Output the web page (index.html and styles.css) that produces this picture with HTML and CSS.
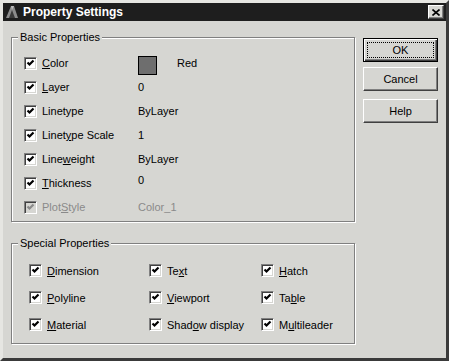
FILE: index.html
```html
<!DOCTYPE html>
<html lang="en">
<head>
    <meta charset="UTF-8">
    <title>Property Settings</title>
    <link rel="stylesheet" href="styles.css">
</head>
<body>
    <div class="window">
        <!-- title bar -->
        <div class="titlebar">
            <svg class="app-icon" width="14" height="14" viewBox="0 0 14 14">
                <polygon points="1,13 6,1 9,1 13,13" fill="#8c8c8c"/>
                <polygon points="4,13 7,5 10,13" fill="#3a3a3a"/>
                <polygon points="6,1 9,1 7,5" fill="#bdbdbd"/>
            </svg>
            <span class="title">Property Settings</span>
            <span class="close-btn">
                <svg width="8" height="7" viewBox="0 0 8 7">
                    <path d="M0.5 0.5 L7.5 6.5 M7.5 0.5 L0.5 6.5" stroke="#000" stroke-width="1.6"/>
                </svg>
            </span>
        </div>

        <div class="dialog">
            <div class="groups">
                <!-- basic properties -->
                <fieldset class="group basic">
                    <legend>Basic Properties</legend>
                    <div class="prop-list">
                        <div class="prop-row">
                            <label class="check"><span class="box"><svg viewBox="0 0 9 9"><polyline points="1.5,3.5 3.5,5.5 7.5,1.5"/></svg></span><span><u>C</u>olor</span></label>
                            <span class="value color-value"><span class="swatch"></span>Red</span>
                        </div>
                        <div class="prop-row">
                            <label class="check"><span class="box"><svg viewBox="0 0 9 9"><polyline points="1.5,3.5 3.5,5.5 7.5,1.5"/></svg></span><span><u>L</u>ayer</span></label>
                            <span class="value">0</span>
                        </div>
                        <div class="prop-row">
                            <label class="check"><span class="box"><svg viewBox="0 0 9 9"><polyline points="1.5,3.5 3.5,5.5 7.5,1.5"/></svg></span><span>Linetype</span></label>
                            <span class="value">ByLayer</span>
                        </div>
                        <div class="prop-row">
                            <label class="check"><span class="box"><svg viewBox="0 0 9 9"><polyline points="1.5,3.5 3.5,5.5 7.5,1.5"/></svg></span><span>Linet<u>y</u>pe Scale</span></label>
                            <span class="value">1</span>
                        </div>
                        <div class="prop-row">
                            <label class="check"><span class="box"><svg viewBox="0 0 9 9"><polyline points="1.5,3.5 3.5,5.5 7.5,1.5"/></svg></span><span>Line<u>w</u>eight</span></label>
                            <span class="value">ByLayer</span>
                        </div>
                        <div class="prop-row">
                            <label class="check"><span class="box"><svg viewBox="0 0 9 9"><polyline points="1.5,3.5 3.5,5.5 7.5,1.5"/></svg></span><span><u>T</u>hickness</span></label>
                            <span class="value raised">0</span>
                        </div>
                        <div class="prop-row disabled">
                            <label class="check"><span class="box"><svg viewBox="0 0 9 9"><polyline points="1.5,3.5 3.5,5.5 7.5,1.5"/></svg></span><span>Plot<u>S</u>tyle</span></label>
                            <span class="value">Color_1</span>
                        </div>
                    </div>
                </fieldset>

                <!-- special properties -->
                <fieldset class="group special">
                    <legend>Special Properties</legend>
                    <div class="special-grid">
                        <label class="check"><span class="box"><svg viewBox="0 0 9 9"><polyline points="1.5,3.5 3.5,5.5 7.5,1.5"/></svg></span><span><u>D</u>imension</span></label>
                        <label class="check"><span class="box"><svg viewBox="0 0 9 9"><polyline points="1.5,3.5 3.5,5.5 7.5,1.5"/></svg></span><span>Te<u>x</u>t</span></label>
                        <label class="check"><span class="box"><svg viewBox="0 0 9 9"><polyline points="1.5,3.5 3.5,5.5 7.5,1.5"/></svg></span><span><u>H</u>atch</span></label>
                        <label class="check"><span class="box"><svg viewBox="0 0 9 9"><polyline points="1.5,3.5 3.5,5.5 7.5,1.5"/></svg></span><span><u>P</u>olyline</span></label>
                        <label class="check"><span class="box"><svg viewBox="0 0 9 9"><polyline points="1.5,3.5 3.5,5.5 7.5,1.5"/></svg></span><span><u>V</u>iewport</span></label>
                        <label class="check"><span class="box"><svg viewBox="0 0 9 9"><polyline points="1.5,3.5 3.5,5.5 7.5,1.5"/></svg></span><span>Ta<u>b</u>le</span></label>
                        <label class="check"><span class="box"><svg viewBox="0 0 9 9"><polyline points="1.5,3.5 3.5,5.5 7.5,1.5"/></svg></span><span><u>M</u>aterial</span></label>
                        <label class="check"><span class="box"><svg viewBox="0 0 9 9"><polyline points="1.5,3.5 3.5,5.5 7.5,1.5"/></svg></span><span>Shad<u>o</u>w display</span></label>
                        <label class="check"><span class="box"><svg viewBox="0 0 9 9"><polyline points="1.5,3.5 3.5,5.5 7.5,1.5"/></svg></span><span>M<u>u</u>ltileader</span></label>
                    </div>
                </fieldset>
            </div>

            <!-- dialog buttons -->
            <div class="buttons">
                <button class="btn btn-ok"><span class="focus">OK</span></button>
                <button class="btn btn-cancel">Cancel</button>
                <button class="btn btn-help">Help</button>
            </div>
        </div>
    </div>
</body>
</html>
```

FILE: styles.css
```css
:root {
    --face: #d6d6d2;
    --shadow: #808080;
    --dark: #404040;
    --light: #ffffff;
}

body {
    margin: 0;
    font-family: "Liberation Sans", Arial, sans-serif;
    font-size: 11px;
    color: #000;
    background: var(--face);
}

.window {
    width: 449px;
    height: 361px;
    box-sizing: border-box;
    background: var(--face);
    border: 3px solid;
    border-color: #e6e6e2 #3a3a3a #3a3a3a #e6e6e2;
    display: flex;
    flex-direction: column;
}

/* title bar */
.titlebar {
    height: 18px;
    flex-shrink: 0;
    background: #1e1e1e;
    color: #fff;
    display: flex;
    align-items: center;
    gap: 4px;
    padding: 0 2px;
}

.app-icon {
    display: block;
}

.title {
    font-weight: bold;
    font-size: 12px;
}

.close-btn {
    margin-left: auto;
    width: 16px;
    height: 14px;
    box-sizing: border-box;
    background: var(--face);
    border: 1px solid;
    border-color: var(--light) var(--dark) var(--dark) var(--light);
    box-shadow: inset -1px -1px 0 var(--shadow);
    display: flex;
    align-items: center;
    justify-content: center;
}

.close-btn svg {
    display: block;
}

/* body */
.dialog {
    display: flex;
    gap: 8px;
    padding: 10px 8px 0 8px;
}

.groups {
    width: 344px;
    display: flex;
    flex-direction: column;
}

.group {
    margin: 0;
    padding: 0;
    min-width: 0;
    border: 1px solid var(--shadow);
    box-shadow: 1px 1px 0 var(--light), inset 1px 1px 0 var(--light);
}

.group legend {
    margin-left: 6px;
    padding: 0 2px;
    line-height: 13px;
    background: var(--face);
}

.prop-list {
    padding: 7px 0 2px 12px;
}

.special {
    margin-top: 15px;
}

.prop-row {
    display: grid;
    grid-template-columns: 114px auto;
    align-items: center;
    height: 24px;
}

.value.raised {
    position: relative;
    top: -3px;
}

.color-value {
    display: flex;
    align-items: center;
    gap: 20px;
}

.swatch {
    width: 19px;
    height: 19px;
    box-sizing: border-box;
    border: 1px solid #000;
    background: #6e6e6e;
    position: relative;
    top: 2px;
}

.special-grid {
    display: grid;
    grid-template-columns: 120px 112px auto;
    grid-auto-rows: 27px;
    align-items: center;
    padding: 7px 0 5px 17px;
}

/* checkboxes */
.check {
    display: flex;
    align-items: center;
    gap: 5px;
}

.box {
    width: 13px;
    height: 13px;
    box-sizing: border-box;
    background: #fff;
    border: 1px solid;
    border-color: var(--shadow) var(--light) var(--light) var(--shadow);
    box-shadow: inset 1px 1px 0 var(--dark), inset -1px -1px 0 var(--face);
    padding: 1px;
}

.box svg {
    display: block;
    width: 9px;
    height: 9px;
}

.box polyline {
    fill: none;
    stroke: #000;
    stroke-width: 2.2;
}

.disabled {
    color: #8a8a8a;
}

.disabled .box {
    background: var(--face);
}

.disabled .box polyline {
    stroke: #8a8a8a;
}

/* buttons */
.buttons {
    width: 75px;
    display: flex;
    flex-direction: column;
    padding-top: 7px;
}

.btn {
    height: 24px;
    padding: 0;
    font-family: inherit;
    font-size: 11px;
    color: #000;
    background: var(--face);
    border: 1px solid;
    border-color: var(--light) var(--dark) var(--dark) var(--light);
    box-shadow: inset -1px -1px 0 var(--shadow);
    display: flex;
    align-items: center;
    justify-content: center;
}

.btn-ok {
    border: 1px solid #000;
    box-shadow: inset 1px 1px 0 var(--light), inset -1px -1px 0 var(--dark), inset -2px -2px 0 var(--shadow);
    padding: 3px;
}

.btn-ok .focus {
    width: 100%;
    height: 100%;
    box-sizing: border-box;
    border: 1px dotted #000;
    display: flex;
    align-items: center;
    justify-content: center;
}

.btn-cancel {
    margin-top: 5px;
}

.btn-help {
    margin-top: 8px;
}
```
